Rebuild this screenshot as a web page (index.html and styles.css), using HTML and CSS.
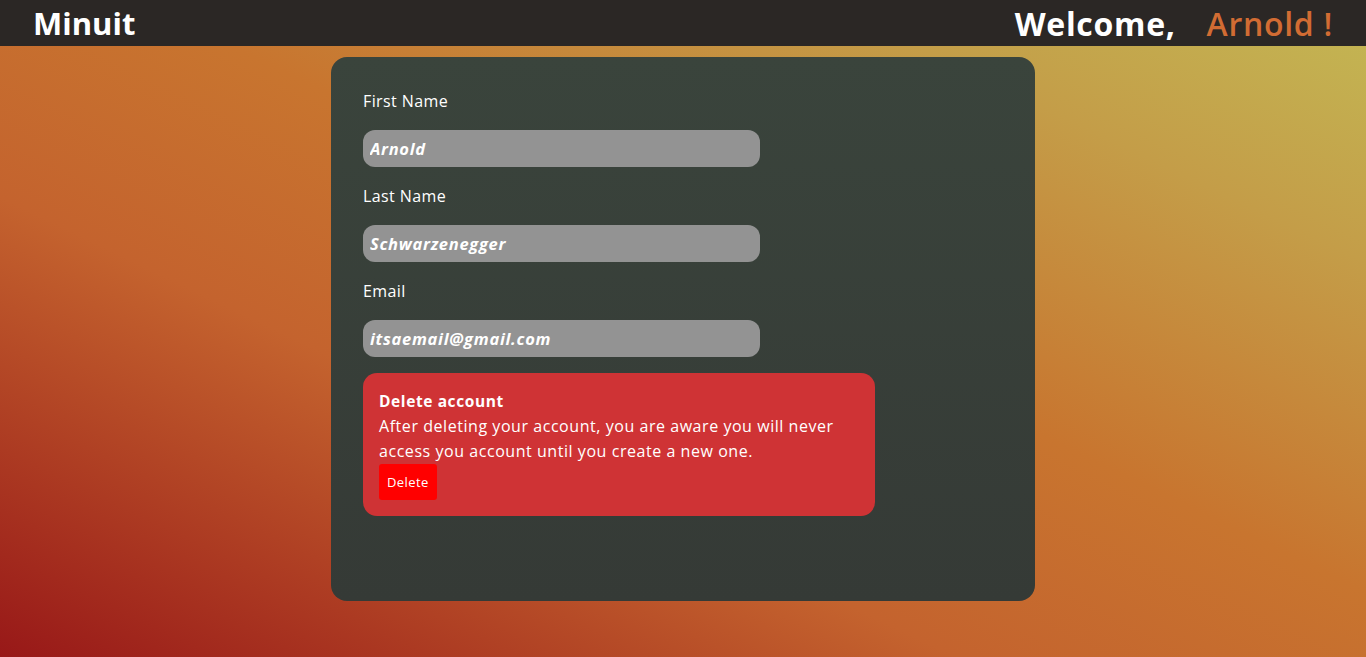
FILE: index.html
```
<!DOCTYPE html>
<html lang="en">
<head>
<meta charset="utf-8">
<title>Minuit - Profile</title>
<link rel="stylesheet" href="styles.css">
</head>
<body>
<header class="topbar">
  <div class="brand">Minuit</div>
  <div class="welcome">Welcome, <span class="who">Arnold !</span></div>
</header>
<main class="page">
  <section class="card">
    <form class="profile">
      <label class="field-label" for="fn">First Name</label>
      <input class="field" id="fn" type="text" value="Arnold" readonly>
      <label class="field-label" for="ln">Last Name</label>
      <input class="field" id="ln" type="text" value="Schwarzenegger" readonly>
      <label class="field-label" for="em">Email</label>
      <input class="field" id="em" type="text" value="itsaemail@gmail.com" readonly>
    </form>
    <div class="danger">
      <div class="danger-title">Delete account</div>
      <p class="danger-text">After deleting your account, you are aware you will never access you account until you create a new one.</p>
      <button class="danger-btn" type="button">Delete</button>
    </div>
  </section>
</main>
</body>
</html>
```
FILE: styles.css
```
* { box-sizing: border-box; }
html, body { height: 100%; }
body {
  margin: 0;
  font-family: "Open Sans", "Liberation Sans", sans-serif;
  color: #fff;
  background: linear-gradient(to top right, #981818 0%, #c4632e 35%, #c8752f 55%, #c49d48 80%, #c3b854 100%);
  min-height: 657px;
  overflow: hidden;
}
.topbar {
  height: 46px;
  background: #2b2725;
  display: flex;
  align-items: center;
  justify-content: space-between;
  padding: 0 33px;
}
.brand {
  font-size: 31px;
  font-weight: 700;
}
.welcome {
  font-size: 32px;
  font-weight: 700;
  letter-spacing: 0.7px;
  white-space: pre;
}
.who {
  color: #d26c33;
  font-weight: 600;
  margin-left: 22px;
}
.page {
  display: flex;
  justify-content: center;
  padding-top: 11px;
}
.card {
  width: 704px;
  height: 544px;
  border-radius: 16px;
  background: linear-gradient(to bottom, #3a443c, #353a36);
  padding: 35px 32px;
}
.profile {
  display: flex;
  flex-direction: column;
  align-items: flex-start;
}
.field-label {
  font-size: 16px;
  letter-spacing: 0.4px;
  line-height: 18px;
  margin-bottom: 20px;
}
.field {
  width: 397px;
  height: 37px;
  border: none;
  border-radius: 12px;
  background: #939393;
  color: #fff;
  font-family: inherit;
  font-size: 16.5px;
  letter-spacing: 0.7px;
  font-weight: 700;
  font-style: italic;
  padding: 0 7px;
  margin-bottom: 20px;
  outline: none;
}
.danger {
  width: 512px;
  margin-top: -4px;
  background: #cf3335;
  border-radius: 14px;
  padding: 18px 16px 16px;
}
.danger-title {
  font-size: 15.5px;
  font-weight: 700;
  letter-spacing: 0.6px;
  line-height: 20px;
}
.danger-text {
  margin: 3px 0 0;
  font-size: 16px;
  letter-spacing: 0.55px;
  line-height: 25px;
}
.danger-btn {
  display: block;
  height: 36px;
  padding: 0 8px;
  border: none;
  border-radius: 3px;
  background: #ff0000;
  color: #fff;
  font-family: inherit;
  font-size: 13px;
  letter-spacing: 0.4px;
}
```
